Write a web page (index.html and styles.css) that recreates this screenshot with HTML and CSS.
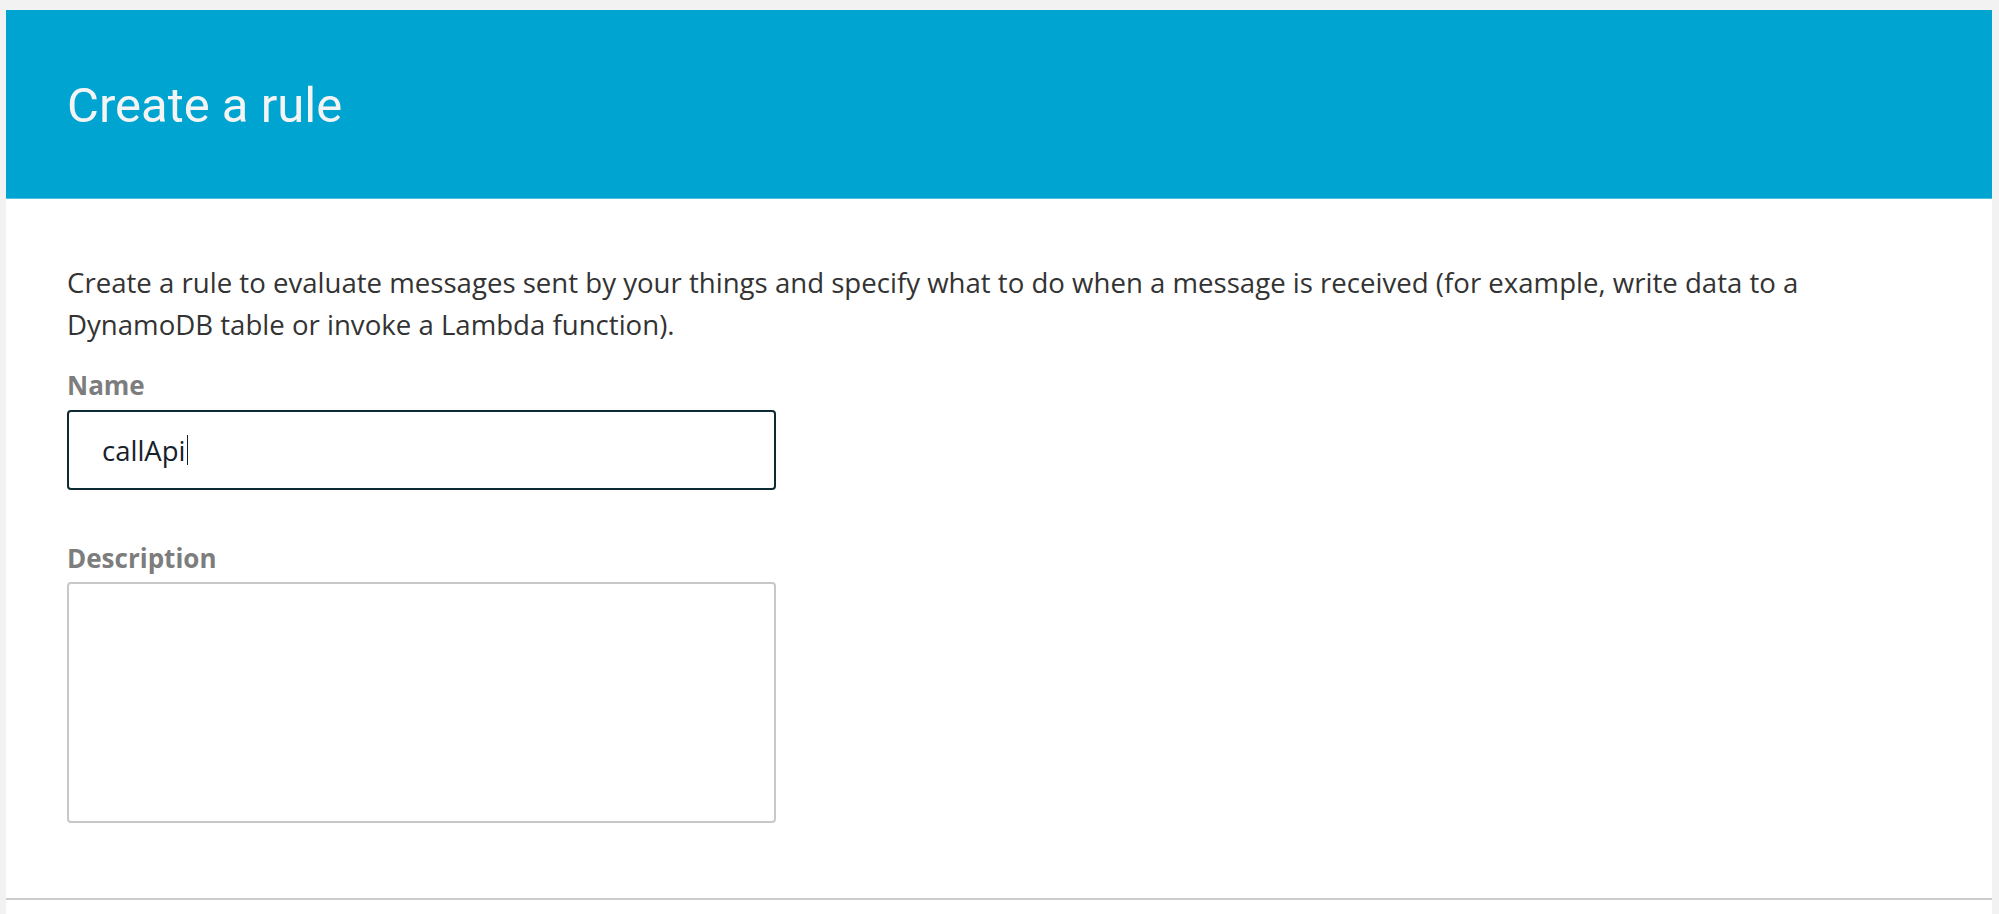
FILE: index.html
```html
<!DOCTYPE html>
<html lang="en">
<head>
<meta charset="utf-8">
<title>Create a rule</title>
<link rel="stylesheet" href="styles.css">
</head>
<body>
  <div class="panel">
    <header class="panel-header">
      <h1 class="panel-title">Create a rule</h1>
    </header>
    <section class="panel-body">
      <p class="intro">Create a rule to evaluate messages sent by your things and specify what to do when a message is received (for example, write data to a DynamoDB table or invoke a Lambda function).</p>
      <div class="field">
        <label class="field-label">Name</label>
        <div class="text-input is-focused"><span class="input-value">callApi</span><span class="caret"></span></div>
      </div>
      <div class="field field-desc">
        <label class="field-label">Description</label>
        <div class="text-area"></div>
      </div>
    </section>
    <div class="panel-divider"></div>
  </div>
</body>
</html>
```

FILE: styles.css
```css
html, body {
  margin: 0;
  padding: 0;
}

body {
  background: #f2f2f2;
  font-family: "Open Sans", Roboto, "Liberation Sans", sans-serif;
  height: 914px;
  overflow: hidden;
}

.panel {
  margin: 10px 7px 0 6px;
  background: #ffffff;
  height: 904px;
  display: flex;
  flex-direction: column;
}

.panel-header {
  background: #00a4d0;
  height: 188px;
  border-bottom: 1px solid #4cc0e0;
  display: flex;
  align-items: center;
  padding: 0 61px;
}

.panel-title {
  margin: 0;
  font-family: Roboto, "Open Sans", sans-serif;
  font-size: 49px;
  font-weight: 400;
  color: #f4f4f4;
  line-height: 1;
  padding-top: 2px;
}

.panel-body {
  padding: 62px 61px 0;
  display: flex;
  flex-direction: column;
}

.intro {
  margin: 0;
  font-size: 27.6px;
  line-height: 42px;
  color: #333333;
  max-width: 1835px;
}

.field {
  display: flex;
  flex-direction: column;
  gap: 4px;
  margin-top: 19px;
}

.field-desc {
  margin-top: 47px;
  gap: 3px;
}

.field-label {
  font-size: 26px;
  line-height: 42px;
  font-weight: 700;
  color: #7d7d7d;
}

.text-input {
  box-sizing: border-box;
  width: 709px;
  height: 80px;
  border: 2px solid #0e2a35;
  border-radius: 4px;
  padding: 0 0 0 33px;
  display: flex;
  align-items: center;
  font-size: 27.5px;
  color: #16222b;
}

.caret {
  display: inline-block;
  width: 1.5px;
  height: 30px;
  background: #16222b;
  margin-left: 1px;
}

.text-area {
  box-sizing: border-box;
  width: 709px;
  height: 241px;
  border: 2px solid #c8c8c8;
  border-radius: 4px;
}

.panel-divider {
  margin-top: auto;
  margin-bottom: 14px;
  height: 2px;
  background: #cccccc;
}
```
